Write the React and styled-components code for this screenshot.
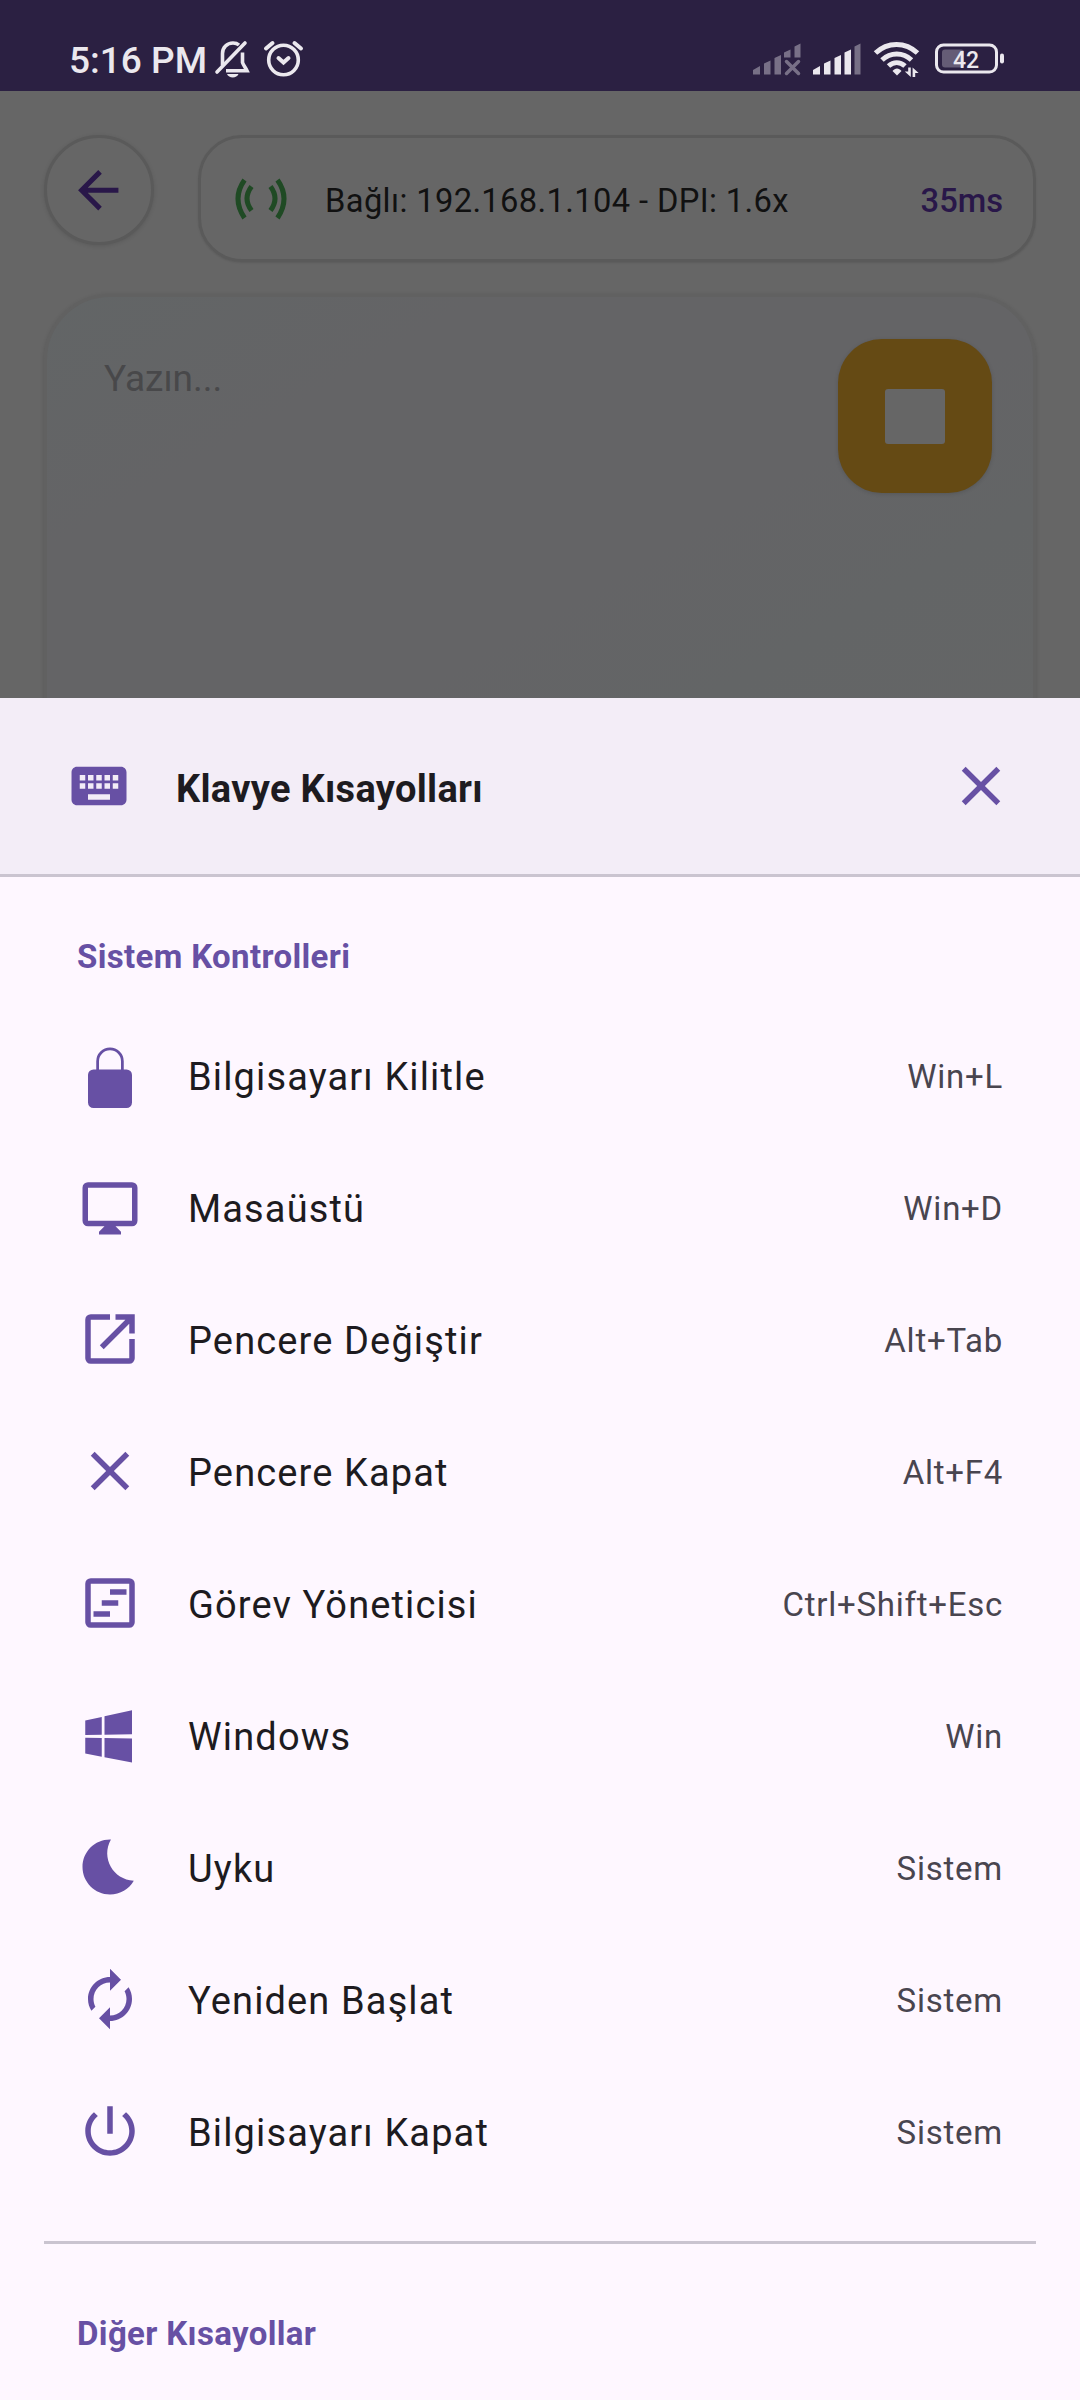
import styled, { createGlobalStyle } from "styled-components";

const GlobalStyle = createGlobalStyle`
  * {
    box-sizing: border-box;
  }

  body {
    margin: 0;
    background: #666;
    font-family: Roboto, "Noto Sans", sans-serif;
  }

  svg {
    display: block;
    flex: none;
  }
`;

const Screen = styled.div`
  display: flex;
  flex-direction: column;
  width: 1080px;
  height: 2400px;
  overflow: hidden;
  background: #666;
`;

const StatusBar = styled.div`
  display: flex;
  align-items: center;
  flex: none;
  height: 91px;
  padding: 29px 75px 0 69px;
  background: #2b2042;
  color: #ebe8ee;
`;

const Clock = styled.span`
  width: 145px;
  padding-top: 2px;
  font-size: 37px;
  font-weight: 500;
  line-height: 60px;
  white-space: nowrap;
`;

const StatusIcons = styled.div`
  display: flex;
  margin-left: auto;
`;

const Backdrop = styled.div`
  display: flex;
  flex-direction: column;
  flex: none;
  height: 607px;
  padding: 44px 44px 0;
  overflow: hidden;
`;

const TopRow = styled.div`
  display: flex;
  justify-content: space-between;
  align-items: flex-start;
  flex: none;
`;

const BackButton = styled.button`
  display: flex;
  align-items: center;
  justify-content: center;
  width: 110px;
  height: 110px;
  padding: 0 1px 0 0;
  border: 3px solid #5a5a5a;
  border-radius: 50%;
  background: #666;
  box-shadow: 0 1px 4px rgba(0, 0, 0, 0.12);
  color: #291749;
`;

const ConnectionCard = styled.div`
  display: flex;
  align-items: center;
  width: 838px;
  height: 127px;
  padding: 0 30px;
  border: 3px solid #5a5a5a;
  border-radius: 44px;
  box-shadow: 0 1px 2px rgba(0, 0, 0, 0.1);
  color: #111;
  font-size: 32.7px;
`;

const Address = styled.span`
  margin: 5px 0 0 34px;
  letter-spacing: 0.37px;
`;

const Ping = styled.span`
  margin: 5px 0 0 auto;
  color: #291749;
  font-weight: 500;
`;

const Editor = styled.div`
  display: flex;
  justify-content: space-between;
  align-items: flex-start;
  flex: none;
  height: 700px;
  margin-top: 32px;
  padding: 42px 41px 0 57px;
  border: 3px solid #616161;
  border-radius: 66px;
  background: linear-gradient(150deg, #626566 0%, #646466 20%, #646466 48%, #636566 62%, #666 100%);
  box-shadow: 0 1px 4px rgba(0, 0, 0, 0.14);
`;

const Placeholder = styled.span`
  padding-top: 12px;
  color: #48484a;
  font-size: 37px;
  line-height: 56px;
`;

const StopButton = styled.button`
  display: flex;
  align-items: center;
  justify-content: center;
  width: 154px;
  height: 154px;
  padding: 0;
  border: 0;
  border-radius: 44px;
  background: #654a14;
  box-shadow: 0 1px 4px rgba(0, 0, 0, 0.14);

  &::before {
    content: "";
    width: 60px;
    height: 55px;
    border-radius: 3px;
    background: #666;
  }
`;

const Sheet = styled.section`
  flex: 1;
  background: #fef7ff;
`;

const SheetHeader = styled.header`
  display: flex;
  align-items: center;
  height: 179px;
  padding: 0 66px;
  border-bottom: 3px solid #cac4d0;
  background: #f3edf7;
  color: #6750a4;
`;

const SheetTitle = styled.h1`
  flex: 1;
  margin: 5px 0 0 44px;
  color: #1d1b20;
  font-size: 38px;
  font-weight: 700;
  letter-spacing: 0.3px;
`;

const SectionTitle = styled.h2`
  margin: 0;
  padding: ${(props) => (props.$afterDivider ? 66 : 56)}px 77px 0;
  height: ${(props) => (props.$afterDivider ? 142 : 132)}px;
  color: #6750a4;
  font-size: 33px;
  font-weight: 700;
  line-height: 47px;
  letter-spacing: 0.35px;
`;

const List = styled.ul`
  margin: 0;
  padding: 0;
  list-style-type: none;
`;

const Row = styled.li`
  display: flex;
  align-items: center;
  height: 132px;
  padding: 0 77px;
  color: #6750a4;
`;

const Label = styled.span`
  flex: 1;
  margin: 4px 0 0 45px;
  color: #1d1b20;
  font-size: 38px;
  letter-spacing: 1.13px;
`;

const Keys = styled.span`
  margin-top: 3px;
  color: #49454f;
  font-size: 33px;
  letter-spacing: 0.75px;
`;

const Divider = styled.hr`
  height: 3px;
  margin: 44px 44px 0;
  border: 0;
  background: #cac4d0;
`;

const icons = {
  back: "M20 11H7.83l5.59-5.59L12 4l-8 8 8 8 1.41-1.41L7.83 13H20v-2z",
  keyboard:
    "M20 5H4c-1.1 0-1.99.9-1.99 2L2 17c0 1.1.9 2 2 2h16c1.1 0 2-.9 2-2V7c0-1.1-.9-2-2-2zm-9 3h2v2h-2V8zm0 3h2v2h-2v-2zM8 8h2v2H8V8zm0 3h2v2H8v-2zm-1 2H5v-2h2v2zm0-3H5V8h2v2zm9 7H8v-2h8v2zm0-4h-2v-2h2v2zm0-3h-2V8h2v2zm3 3h-2v-2h2v2zm0-3h-2V8h2v2z",
  close:
    "M19 6.41L17.59 5 12 10.59 6.41 5 5 6.41 10.59 12 5 17.59 6.41 19 12 13.41 17.59 19 19 17.59 13.41 12z",
  lock: "M18 10h-1V7A5 5 0 0 0 7 7v3H6a2 2 0 0 0-2 2v10a2 2 0 0 0 2 2h12a2 2 0 0 0 2-2V12a2 2 0 0 0-2-2zM8 10V7a4 4 0 0 1 8 0v3z",
  desktop:
    "M20 3H4a2 2 0 0 0-2 2v12a2 2 0 0 0 2 2h6l-2 2v1h8v-1l-2-2h6a2 2 0 0 0 2-2V5a2 2 0 0 0-2-2zm0 14H4V5h16z",
  switch:
    "M12 3H5a2 2 0 0 0-2 2v14a2 2 0 0 0 2 2h14a2 2 0 0 0 2-2v-7h-2v7H5V5h7zM14 3v2h3.59l-9.3 9.29 1.42 1.42L19 6.41V10h2V3z",
  tasks:
    "M19 3H5a2 2 0 0 0-2 2v14a2 2 0 0 0 2 2h14a2 2 0 0 0 2-2V5a2 2 0 0 0-2-2zm0 16H5V5h14zM12 7h6v2h-6zM9 11h6v2H9zM6 15h6v2H6z",
  windows:
    "M3 12V6.75l6-1.32v6.48L3 12zM20 3v8.75l-10 .15V5.21L20 3zM3 13l6 .09v6.81l-6-1.15V13zM20 13.25V22l-10-1.91V13.1l10 .15z",
  sleep:
    "M12.34 2.02C6.59 1.82 2 6.42 2 12c0 5.52 4.48 10 10 10 3.71 0 6.93-2.02 8.66-5.02-7.51-.25-12.09-8.43-8.32-14.96z",
  restart:
    "M12 6v3l4-4-4-4v3c-4.42 0-8 3.58-8 8 0 1.57.46 3.03 1.24 4.26L6.7 14.8c-.45-.83-.7-1.79-.7-2.8 0-3.31 2.69-6 6-6zm6.76 1.74L17.3 9.2c.44.84.7 1.79.7 2.8 0 3.31-2.69 6-6 6v-3l-4 4 4 4v-3c4.42 0 8-3.58 8-8 0-1.57-.46-3.03-1.24-4.26z",
  power:
    "M13 3h-2v10h2V3zm4.83 2.17l-1.42 1.42C17.99 7.86 19 9.81 19 12c0 3.87-3.13 7-7 7s-7-3.13-7-7c0-2.19 1.01-4.14 2.58-5.42L6.17 5.17C4.23 6.82 3 9.26 3 12c0 4.97 4.03 9 9 9s9-4.03 9-9c0-2.74-1.23-5.18-3.17-6.83z",
};

const shortcuts = [
  { icon: "lock", label: "Bilgisayarı Kilitle", keys: "Win+L" },
  { icon: "desktop", label: "Masaüstü", keys: "Win+D" },
  { icon: "switch", label: "Pencere Değiştir", keys: "Alt+Tab" },
  { icon: "close", label: "Pencere Kapat", keys: "Alt+F4" },
  { icon: "tasks", label: "Görev Yöneticisi", keys: "Ctrl+Shift+Esc" },
  { icon: "windows", label: "Windows", keys: "Win" },
  { icon: "sleep", label: "Uyku", keys: "Sistem" },
  { icon: "restart", label: "Yeniden Başlat", keys: "Sistem" },
  { icon: "power", label: "Bilgisayarı Kapat", keys: "Sistem" },
];

function Icon({ name, size = 66 }) {
  return (
    <svg width={size} height={size} viewBox="0 0 24 24" fill="currentColor" overflow="visible">
      <path fillRule="evenodd" d={icons[name]} />
    </svg>
  );
}

// Muted bell and alarm clock, right of the time
function AlertIcons() {
  return (
    <svg width="90" height="42" viewBox="214 39.500 90 42" fill="none" stroke="currentColor" strokeWidth="3.6">
      <path d="M217 72.500L245 43.500" strokeLinecap="round" />
      <path d="M222.500 66V54c0-6 4.500-10.500 10.500-10.500 2.500 0 4.500.7 6 2M242.500 53v10c1 3 3 5 4.500 8.200H226" />
      <path d="M227 74.500h11.500c-1.500 4.500-10 4.500-11.500 0z" fill="currentColor" stroke="none" />
      <circle cx="283.500" cy="60.500" r="14.800" />
      <path d="M278.500 58.500l5 4.500 5-4.500M266 49l6.500-5.500M301 49l-6.500-5.500" strokeWidth="4" strokeLinecap="round" />
    </svg>
  );
}

function SystemIcons() {
  return (
    <svg width="252" height="42" viewBox="753 39.500 252 42" fill="currentColor">
      <g opacity="0.4">
        <path d="M753 70.500l7-4v8.500h-7zM764 64l6.500-3v14H764zM774.500 58.500l6.500-3V75h-6.500zM784 53l6.500-3v8H784zM794.500 47l6-3v14h-6z" />
        <path d="M786.500 62l12 12M798.500 62l-12 12" stroke="currentColor" strokeWidth="3.500" strokeLinecap="round" />
      </g>
      <path d="M813 70.500l7-4v8.500h-7zM824 64l6.500-3v14H824zM834.500 58.500l6.500-3V75h-6.500zM844.500 53l6.500-3v25h-6.500z" />
      <path d="M854.500 47l6-3v31h-6z" opacity="0.4" />
      <g fill="none" stroke="currentColor" strokeWidth="5">
        <path d="M875.500 53.500c12-11.500 30-11.500 42 0" />
        <path d="M882 60.500c8.500-8 21-8 29.500 0" />
        <path d="M888.500 66.500c5-4.500 11.500-4.500 16.500 0" />
      </g>
      <path d="M892.500 71.500c2.500-3.500 6.500-3.500 9 0l-4.500 4.500z" />
      <path d="M908.200 68h2.600v9.500l-6-5.500h3.400zM912.600 77.500V68l6 5.500h-3.400v4z" />
      <rect x="936.500" y="45.500" width="60" height="27" rx="7" fill="none" stroke="currentColor" strokeWidth="3" />
      <rect x="942" y="50" width="22" height="18" rx="3" opacity="0.3" />
      <rect x="1000" y="54" width="4" height="10" rx="2" />
      <text x="966" y="68" fontSize="23" fontWeight="500" textAnchor="middle">
        42
      </text>
    </svg>
  );
}

function SignalIcon() {
  return (
    <svg width="60" height="60" viewBox="0 0 60 60" fill="none" stroke="#1f4a24" strokeWidth="5">
      <path d="M13.500 11q-13 18.500 0 38M20.500 17.500q-9 12 0 24M46.500 11q13 18.500 0 38M39.500 17.500q9 12 0 24" />
    </svg>
  );
}

export default function App() {
  return (
    <Screen>
      <GlobalStyle />
      <StatusBar>
        <Clock>5:16 PM</Clock>
        <AlertIcons />
        <StatusIcons>
          <SystemIcons />
        </StatusIcons>
      </StatusBar>

      <Backdrop>
        <TopRow>
          <BackButton>
            <Icon name="back" size={60.5} />
          </BackButton>
          <ConnectionCard>
            <SignalIcon />
            <Address>Bağlı: 192.168.1.104 - DPI: 1.6x</Address>
            <Ping>35ms</Ping>
          </ConnectionCard>
        </TopRow>
        <Editor>
          <Placeholder>Yazın...</Placeholder>
          <StopButton />
        </Editor>
      </Backdrop>

      <Sheet>
        <SheetHeader>
          <Icon name="keyboard" />
          <SheetTitle>Klavye Kısayolları</SheetTitle>
          <Icon name="close" />
        </SheetHeader>
        <SectionTitle>Sistem Kontrolleri</SectionTitle>
        <List>
          {shortcuts.map((item) => (
            <Row key={item.label}>
              <Icon name={item.icon} />
              <Label>{item.label}</Label>
              <Keys>{item.keys}</Keys>
            </Row>
          ))}
        </List>
        <Divider />
        <SectionTitle $afterDivider>Diğer Kısayollar</SectionTitle>
      </Sheet>
    </Screen>
  );
}
